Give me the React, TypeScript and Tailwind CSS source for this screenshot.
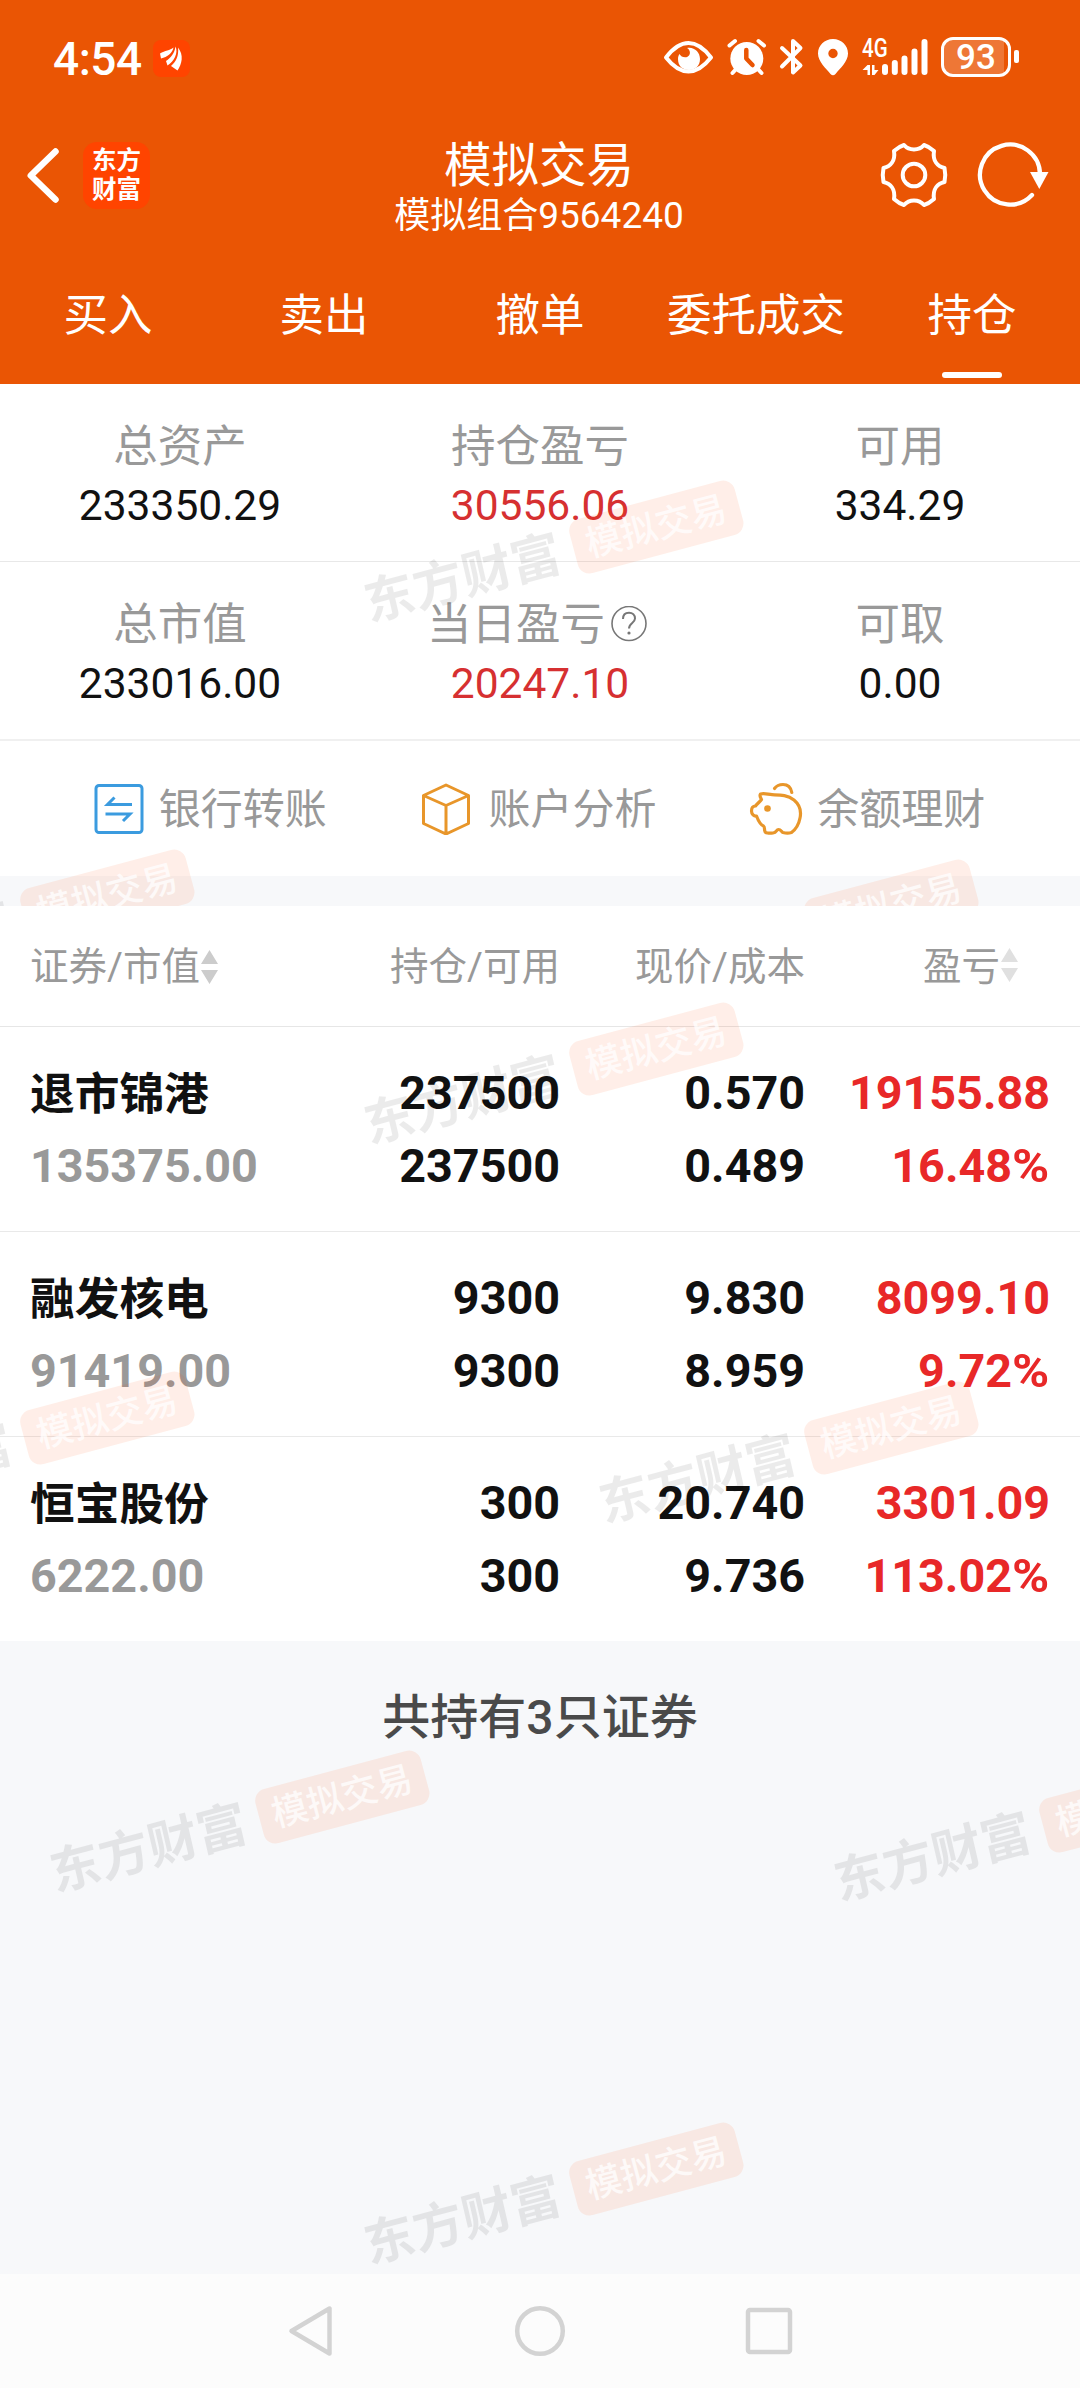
import React from "react";

function Watermark({ x, y }: { x: number; y: number }) {
  return (
    <div
      className="pointer-events-none absolute flex h-[56px] w-[387px] -translate-x-1/2 -translate-y-1/2 -rotate-15 items-center justify-between"
      style={{ left: x, top: y }}
    >
      <span className="-skew-x-2 whitespace-nowrap text-[50.500px] font-bold leading-[56px] text-black/8">东方财富</span>
      <span className="flex h-[56px] w-[171px] items-center justify-center whitespace-nowrap rounded-[12px] bg-[#ff4400]/9 text-[36px] font-medium leading-[56px] text-white/75">
        模拟交易
      </span>
    </div>
  );
}

function StatusBar() {
  return (
    <div className="flex h-[114px] items-start pt-[36px] text-white">
      <span className="ml-[53px] w-[100px] text-[46px] font-medium leading-[46px] tracking-[-0.5px]">4:54</span>
      <svg className="mt-[4px] h-[37px] w-[37px]" viewBox="0 0 37 37">
        <rect width="37" height="37" rx="8" fill="#ff4400" />
        <path d="M7 13.500C12 10.500 17 10.500 20.500 7.500C19.500 13 14.500 17 8 18.500ZM13 21C18 17.500 21.500 13.500 22.500 6.500C25.500 13 21 21.500 14.500 25.500ZM18 26C23 21.500 26 16 25 7.500C31 15 29 24 24.500 30.500Z" fill="white" />
      </svg>
      <div className="ml-[471px] flex h-[44px]">
        <svg className="h-[44px] w-[54px]" viewBox="662 36 54 44" fill="none">
          <path d="M667 57.5Q678 43 689.500 43T712 57.500Q701 71.500 689.500 71.500T667 57.500Z" stroke="white" strokeWidth="4" strokeLinejoin="round" />
          <path d="M688 48C695 46.500 701 52 701 59C701 66 696 70 690 70C683.500 70 679 66 679 59C679 57 679.600 55 680.500 54C682 57 687 59 690 55.500C692 53 690.500 49 688 48Z" fill="white" />
        </svg>
        <svg className="ml-[9px] h-[44px] w-[46px]" viewBox="725 36 46 44" fill="none">
          <circle cx="747.800" cy="58.500" r="16.500" fill="white" />
          <path d="M730.500 45.500L736 41M765 45.500L759.500 41M738 68L733.500 73M758 68L762.500 73" stroke="white" strokeWidth="4" strokeLinecap="round" />
          <path d="M747.300 50V58.500L753.500 65" stroke="#ea5504" strokeWidth="4.500" strokeLinecap="round" strokeLinejoin="round" />
        </svg>
        <svg className="ml-[7px] h-[44px] w-[30px]" viewBox="778 36 30 44" fill="none">
          <path d="M783 48L801.500 65.500L794 72.500V41L801.500 48L783 66.500" stroke="white" strokeWidth="4" strokeLinecap="round" strokeLinejoin="round" />
        </svg>
        <svg className="ml-[9px] h-[44px] w-[34px]" viewBox="817 36 34 44">
          <path fillRule="evenodd" d="M834 39C825.500 39 819 45.500 819 53.500C819 61.500 827 68.500 831.500 74Q834 76.500 836.500 74C841 68.500 849 61.500 849 53.500C849 45.500 842.500 39 834 39ZM834 48.800A4.700 4.700 0 1 1 834 58.200A4.700 4.700 0 1 1 834 48.800Z" fill="white" />
        </svg>
        <div className="relative ml-[12px] h-[44px] w-[67px]">
          <span className="absolute left-0 top-0 origin-left scale-x-[0.82] text-[25px] font-medium leading-[25px]">4G</span>
          <svg className="h-[44px] w-[67px]" viewBox="863 36 67 44" fill="none">
            <path d="M868.500 75V65L863.500 70H868.500V75H871V65H868.500ZM873 65V75H875.500L879.500 70H875.500V65Z" fill="white" />
            <path d="M886 67V72M895.800 63V72M905.500 58.500V72M915.500 51.500V72M925.500 42V72" stroke="white" strokeWidth="6" strokeLinecap="round" />
          </svg>
        </div>
        <div className="ml-[12px] flex items-center">
          <div className="mt-[-3px] flex h-[40px] w-[70px] rounded-[12px] border-[3px] border-white">
            <span className="flex h-full w-[60px] items-center justify-center rounded-l-[8px] bg-white/20 pl-[4px] pt-[1px] text-[35px] font-medium leading-none">93</span>
          </div>
          <div className="ml-[3px] mt-[-3px] h-[13px] w-[5px] rounded-[2px] bg-white" />
        </div>
      </div>
    </div>
  );
}

function TitleBar() {
  return (
    <div className="grid h-[140px] grid-cols-[1fr_300px_1fr] text-white">
      <div className="flex pt-[28px]">
        <svg className="ml-[24px] mt-[3px] h-[60px] w-[40px]" viewBox="24 145 40 60" fill="none">
          <path d="M55.500 151.500L30.800 175.500L55.500 199.500" stroke="white" strokeWidth="6.500" strokeLinecap="round" strokeLinejoin="round" />
        </svg>
        <div className="ml-[19px] flex h-[67px] w-[67px] flex-col items-center rounded-[14px] bg-[#ff4400] pt-[4px] text-[24.500px] font-bold leading-[29px]">
          <span>东方</span>
          <span>财富</span>
        </div>
      </div>
      <div className="flex flex-col items-center whitespace-nowrap pr-[2px] pt-[24px]">
        <div className="text-[47.500px] leading-[56px]">模拟交易</div>
        <div className="flex text-[36px] leading-[44px]">
          模拟组合<span className="text-[37px]">9564240</span>
        </div>
      </div>
      <div className="flex justify-end pr-[27px] pt-[24px]">
        <svg className="h-[74px] w-[74px]" viewBox="-37 -37 74 74" fill="none" stroke="white" strokeWidth="4" strokeLinejoin="round">
          <path d="M-10 -30C-7 -26.500 -4 -25.500 0 -25.500S7 -26.500 10 -30Q15 -28.500 20 -24C18.500 -14 23.500 -8.500 30.500 -7Q32 0 30.500 7C23.500 8.500 18.500 14 20 24Q15 28.500 10 30C7 26.500 4 25.500 0 25.500S-7 26.500 -10 30Q-15 28.500 -20 24C-18.500 14 -23.500 8.500 -30.500 7Q-32 0 -30.500 -7C-23.500 -8.500 -18.500 -14 -20 -24Q-15 -28.500 -10 -30Z" />
          <circle r="11.300" />
        </svg>
        <svg className="ml-[24px] h-[74px] w-[78px]" viewBox="976 138 78 74" fill="none">
          <path d="M1041 174A30 30 0 1 0 1033 195" stroke="white" strokeWidth="4.300" strokeLinecap="round" />
          <path d="M1031 172H1049.500L1040.300 189Z" fill="white" />
        </svg>
      </div>
    </div>
  );
}

const tabs = ["买入", "卖出", "撤单", "委托成交", "持仓"];

function Tabs() {
  return (
    <div className="grid h-[130px] grid-cols-5 text-[44.500px] leading-[60px] text-white">
      {tabs.map((t) => (
        <div key={t} className="flex flex-col items-center pt-[32px]">
          {t}
          {t === "持仓" && <div className="mt-[26px] h-[6px] w-[60px] rounded-full bg-white" />}
        </div>
      ))}
    </div>
  );
}

function Stat({ label, value, red, help }: { label: string; value: string; red?: boolean; help?: boolean }) {
  return (
    <div className="flex flex-col items-center">
      <div className="flex items-center text-[44.500px] leading-[60px] text-[#999999]">
        {label}
        {help && (
          <svg className="ml-[5px] mr-[5px] h-[38px] w-[38px]" viewBox="0 0 38 38" fill="none" stroke="#777777">
            <circle cx="19" cy="17.500" r="17" strokeWidth="1.600" />
            <path d="M13 13C13 9 15.500 6.800 19 6.800S25 9 25 12.500C25 17 19 17 19 22.500" strokeWidth="2" />
            <circle cx="19" cy="27" r="1.600" fill="#777777" stroke="none" />
          </svg>
        )}
      </div>
      <div className={red ? "text-[42.500px] leading-[57px] text-[#d63031]" : "text-[42.500px] leading-[57px] text-[#111111]"}>{value}</div>
    </div>
  );
}

function TransferIcon() {
  return (
    <svg className="h-[52px] w-[50px]" viewBox="0 0 50 52" fill="none" stroke="#3b9bdf">
      <rect x="2" y="2.500" width="46" height="47" rx="3" strokeWidth="3" />
      <path d="M38 21.500H13.500L20.500 14.500M11.500 31H36L29 38" strokeWidth="3" />
    </svg>
  );
}

function CubeIcon() {
  return (
    <svg className="h-[52px] w-[50px]" viewBox="0 0 50 52" fill="none" stroke="#e8962a" strokeWidth="3" strokeLinejoin="round">
      <path d="M25 2L47.500 12.500V40.500L25 51L2.500 40.500V12.500ZM2.500 12.500L25 22.500L47.500 12.500M25 22.500V51" />
    </svg>
  );
}

function PigIcon() {
  return (
    <svg className="h-[54px] w-[54px]" viewBox="751 782 54 54" fill="none" stroke="#e8962a" strokeWidth="3.200" strokeLinejoin="round" strokeLinecap="round">
      <path d="M776.500 788.500C779 785 782 784.500 785 784.500C790 784.500 793 788 793.800 792.500" />
      <path d="M762.500 794C767 793 770 794.500 774 794.700C781 795 789 794.500 796 800C802 805 803.500 811 802 818C801 823.500 797.500 829.500 793.500 832.500C790 833.500 787 833 785 832.500C783.500 832 783 829.500 780.500 829.500C778 829.500 779 832.500 775 833C771 833.500 767 833 767 831.500C766 829 767 827 765.500 826C762 824.500 760 820 758.500 816C756 816.500 753.500 814 753.500 811C753.500 808 754.500 806 757.500 806C759 804 762 801.500 763.500 799.500C763 798 761 796 762.500 794Z" />
      <circle cx="769.500" cy="808.500" r="3.300" fill="#e8962a" stroke="none" />
    </svg>
  );
}

function Sort({ faded }: { faded?: boolean }) {
  return (
    <svg className={faded ? "mb-[4px] ml-[1px] h-[34px] w-[17px] opacity-60" : "ml-[1px] h-[34px] w-[17px]"} viewBox="0 0 17 34" fill="#cccccc">
      <path d="M8.500 0L17 14H0ZM0 20H17L8.500 34Z" />
    </svg>
  );
}

const holdings = [
  ["退市锦港", "135375.00", "237500", "237500", "0.570", "0.489", "19155.88", "16.48"],
  ["融发核电", "91419.00", "9300", "9300", "9.830", "8.959", "8099.10", "9.72"],
  ["恒宝股份", "6222.00", "300", "300", "20.740", "9.736", "3301.09", "113.02"],
];

export default function App() {
  return (
    <div className='flex h-[2388px] w-[1080px] flex-col overflow-hidden bg-[#f7f8fa] font-["Roboto","Noto_Sans_CJK_SC",sans-serif]'>
      <header className="h-[384px] shrink-0 bg-[#ea5504]">
        <StatusBar />
        <TitleBar />
        <Tabs />
      </header>

      <section className="relative h-[522px] shrink-0 overflow-hidden">
        <div className="grid h-[178px] grid-cols-3 border-b border-[#e8e8e8] bg-white pt-[33px]">
          <Stat label="总资产" value="233350.29" />
          <Stat label="持仓盈亏" value="30556.06" red />
          <Stat label="可用" value="334.29" />
        </div>
        <div className="grid h-[179px] grid-cols-3 border-b-2 border-[#f0f0f0] bg-white pt-[33px]">
          <Stat label="总市值" value="233016.00" />
          <Stat label="当日盈亏" value="20247.10" red help />
          <Stat label="可取" value="0.00" />
        </div>
        <div className="flex h-[135px] items-center justify-evenly bg-white text-[42px] leading-[60px] text-[#999999]">
          <div className="flex items-center gap-[15px] pl-[1px]">
            <TransferIcon />
            <span className="pt-[2px]">银行转账</span>
          </div>
          <div className="flex items-center gap-[17px] pl-[2px]">
            <CubeIcon />
            <span className="pt-[2px]">账户分析</span>
          </div>
          <div className="flex items-center gap-[14px] pr-[2px]">
            <PigIcon />
            <span className="pt-[2px]">余额理财</span>
          </div>
        </div>
        <Watermark x={552} y={171} />
        <Watermark x={3} y={540} />
        <Watermark x={787} y={550} />
      </section>

      <section className="relative h-[1368px] shrink-0 overflow-hidden">
        <div className="grid h-[121px] grid-cols-[1fr_241px_245px_245px] border-b border-[#e6e6e6] bg-white pl-[30px] pr-[30px] pt-[2px] text-[38.500px] leading-[118px] text-[#999999]">
          <div className="flex h-[118px] items-center">
            证券/市值
            <Sort />
          </div>
          <div className="text-right">持仓/可用</div>
          <div className="text-right">现价/成本</div>
          <div className="flex h-[118px] items-center justify-end pr-[32px]">
            盈亏
            <Sort faded />
          </div>
        </div>
        {holdings.map((h) => (
          <div
            key={h[0]}
            className={
              h[0] === "恒宝股份"
                ? "grid h-[204px] grid-cols-[1fr_241px_245px_245px] bg-white pl-[30px] pr-[30px] pt-[30px] text-[46.700px] font-bold leading-[73px] text-[#111111]"
                : "grid h-[205px] grid-cols-[1fr_241px_245px_245px] border-b border-[#e9e9e9] bg-white pl-[30px] pr-[30px] pt-[30px] text-[46.700px] font-bold leading-[73px] text-[#111111]"
            }
          >
            <div>
              <div className="-mb-[2px] pt-[2px] text-[44.700px]">{h[0]}</div>
              <div className="text-[#999999]">{h[1]}</div>
            </div>
            <div className="text-right">
              <div>{h[2]}</div>
              <div>{h[3]}</div>
            </div>
            <div className="text-right">
              <div>{h[4]}</div>
              <div>{h[5]}</div>
            </div>
            <div className="text-right text-[#e82828]">
              <div>{h[6]}</div>
              <div className="flex justify-end">
                {h[7]}
                <span className="w-[38px] origin-left scale-x-[1.08] text-left">%</span>
              </div>
            </div>
          </div>
        ))}
        <p className="pt-[47px] text-center text-[48px] font-medium leading-[60px] text-[#4a4a4a]">共持有3只证券</p>
        <Watermark x={552} y={171} />
        <Watermark x={3} y={540} />
        <Watermark x={787} y={550} />
        <Watermark x={238} y={919} />
        <Watermark x={1022} y={928} />
        <Watermark x={552} y={1291} />
      </section>

      <nav className="flex h-[114px] shrink-0 items-center justify-center gap-[173px] bg-[#fcfcfc]">
        <svg className="h-[56px] w-[56px]" viewBox="281 2303 56 56" fill="none" stroke="#d3d3d3" strokeWidth="4.500" strokeLinejoin="round">
          <path d="M327.500 2308.500V2353.500L289.500 2331Z" />
        </svg>
        <svg className="h-[56px] w-[56px]" viewBox="-28 -28 56 56" fill="none" stroke="#d3d3d3" strokeWidth="4.500">
          <circle r="22.800" />
        </svg>
        <svg className="h-[56px] w-[56px]" viewBox="-28 -28 56 56" fill="none" stroke="#d3d3d3" strokeWidth="4.500">
          <rect x="-21" y="-21" width="42" height="42" rx="2" />
        </svg>
      </nav>
    </div>
  );
}
